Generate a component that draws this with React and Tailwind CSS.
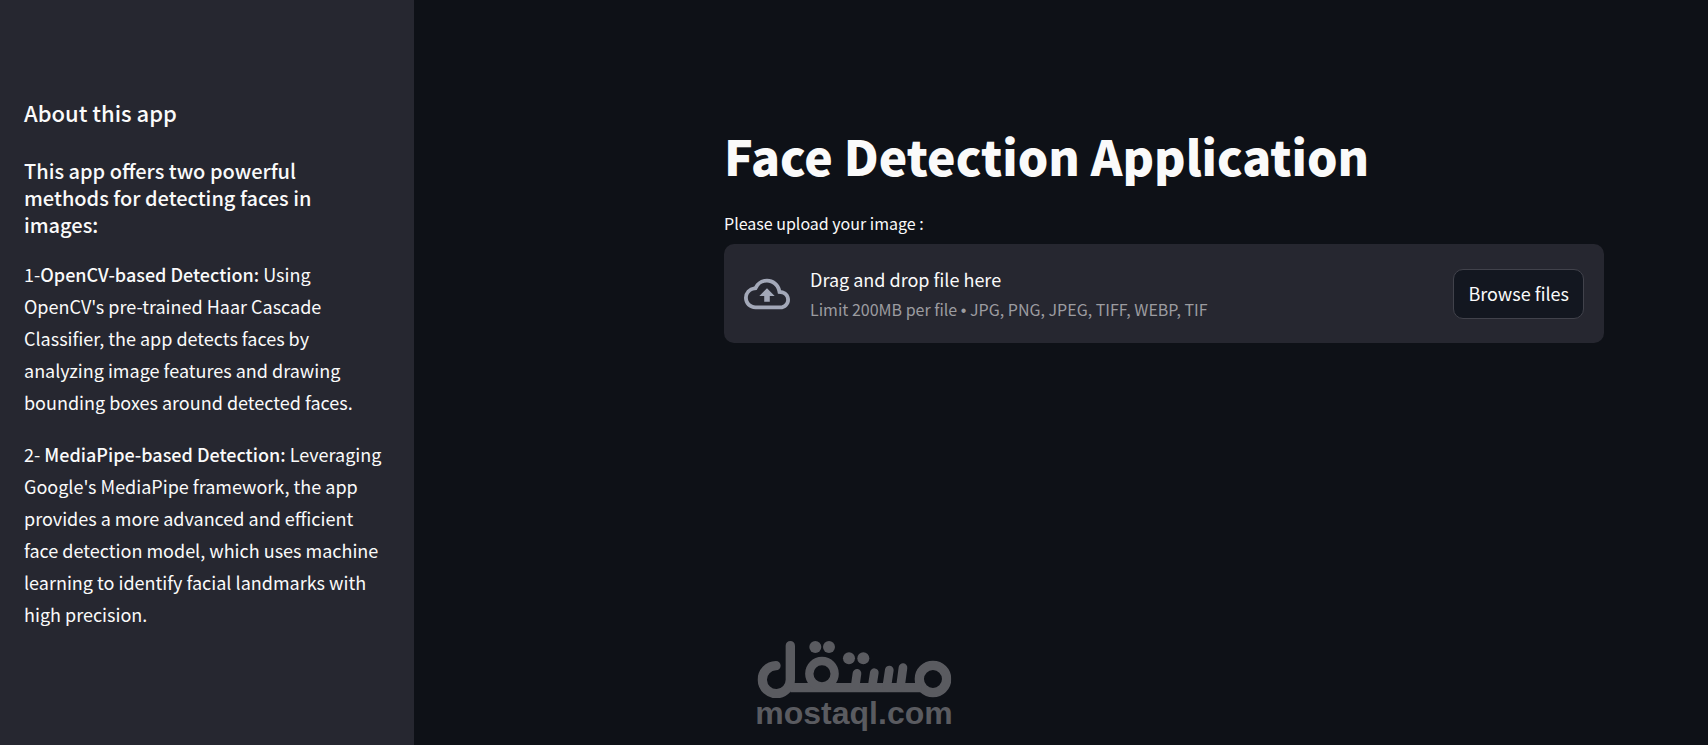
import React, { useRef } from "react";
import { MdOutlineCloudUpload } from "react-icons/md";

const METHODS = [
  {
    prefix: "1-",
    name: "OpenCV-based Detection:",
    text: "Using OpenCV's pre-trained Haar Cascade Classifier, the app detects faces by analyzing image features and drawing bounding boxes around detected faces.",
  },
  {
    prefix: "2- ",
    name: "MediaPipe-based Detection:",
    text: "Leveraging Google's MediaPipe framework, the app provides a more advanced and efficient face detection model, which uses machine learning to identify facial landmarks with high precision.",
  },
];

function Sidebar() {
  return (
    <aside className="w-[414px] shrink-0 bg-[#262730] px-6 pt-24">
      <h2 className="text-[22px] leading-8 font-medium">About this app</h2>
      <h3 className="mt-[29px] mb-5 max-w-[320px] text-[20px] leading-[27px] font-medium">
        This app offers two powerful methods for detecting faces in images:
      </h3>
      {METHODS.map((method) => (
        <p key={method.name} className="mb-5 text-[18px] leading-8">
          {method.prefix}
          <strong className="font-medium">{method.name}</strong> {method.text}
        </p>
      ))}
    </aside>
  );
}

function FileUploader() {
  const inputRef = useRef(null);

  return (
    <div>
      <label htmlFor="image-upload" className="block text-[16px] leading-7">
        Please upload your image :
      </label>
      <input
        ref={inputRef}
        id="image-upload"
        type="file"
        accept=".jpg,.png,.jpeg,.tiff,.webp,.tif"
        className="hidden"
      />
      <section className="mt-[7px] flex items-center rounded-[10px] bg-[#262730] p-5">
        <MdOutlineCloudUpload className="mr-5 size-[46px] shrink-0 text-[#a3a8b8]" />
        <div className="flex-1">
          <p className="text-[18px] leading-[31px]">Drag and drop file here</p>
          <p className="text-[16px] leading-7 text-[#9c9ca0]">
            Limit 200MB per file{" "}
            <span className="font-['Liberation_Sans',sans-serif] leading-none">•</span>{" "}
            JPG, PNG, JPEG, TIFF, WEBP, TIF
          </p>
        </div>
        <button
          type="button"
          onClick={() => inputRef.current?.click()}
          className="h-[50px] rounded-[10px] border border-[#41424b] bg-[#131720] px-[14px] pb-px text-[18px]"
        >
          Browse files
        </button>
      </section>
    </div>
  );
}

function Watermark() {
  return (
    <div className="pointer-events-none absolute bottom-[17px] left-1/2 flex -translate-x-1/2 flex-col items-center text-[#5a5b60]">
      <svg
        viewBox="51 45 582 174"
        className="h-[58px] w-[194px]"
        fill="none"
        stroke="currentColor"
        strokeWidth="28"
        strokeLinecap="round"
        role="img"
        aria-label="مستقل"
      >
        <circle cx="578" cy="162" r="41" />
        <path d="M150 188H545" strokeLinecap="butt" />
        <path d="M150 62V162A42 42 0 1 1 107 122" />
        <circle cx="245" cy="146" r="38" strokeWidth="25" />
        <path d="M350 145L344 188M402 143L395 188M447 135L439 188M488 128L480 188" strokeWidth="26" />
        <g fill="currentColor" stroke="none">
          <circle cx="225" cy="66" r="18" />
          <circle cx="266" cy="66" r="18" />
          <circle cx="326" cy="100" r="18" />
          <circle cx="369" cy="100" r="18" />
        </g>
      </svg>
      <span className="font-['Liberation_Sans',sans-serif] text-[32px] leading-[30px] font-bold">
        mostaql.com
      </span>
    </div>
  );
}

export default function App() {
  return (
    <div className="relative flex min-h-screen bg-[#0e1117] font-['Noto_Sans_CJK_SC',sans-serif] text-[#fafafa]">
      <Sidebar />
      <main className="flex-1 pt-[122px] pr-[104px] pl-[310px]">
        <h1 className="mb-[21px] text-[48px] leading-[66px] font-black">
          Face Detection Application
        </h1>
        <FileUploader />
      </main>
      <Watermark />
    </div>
  );
}
